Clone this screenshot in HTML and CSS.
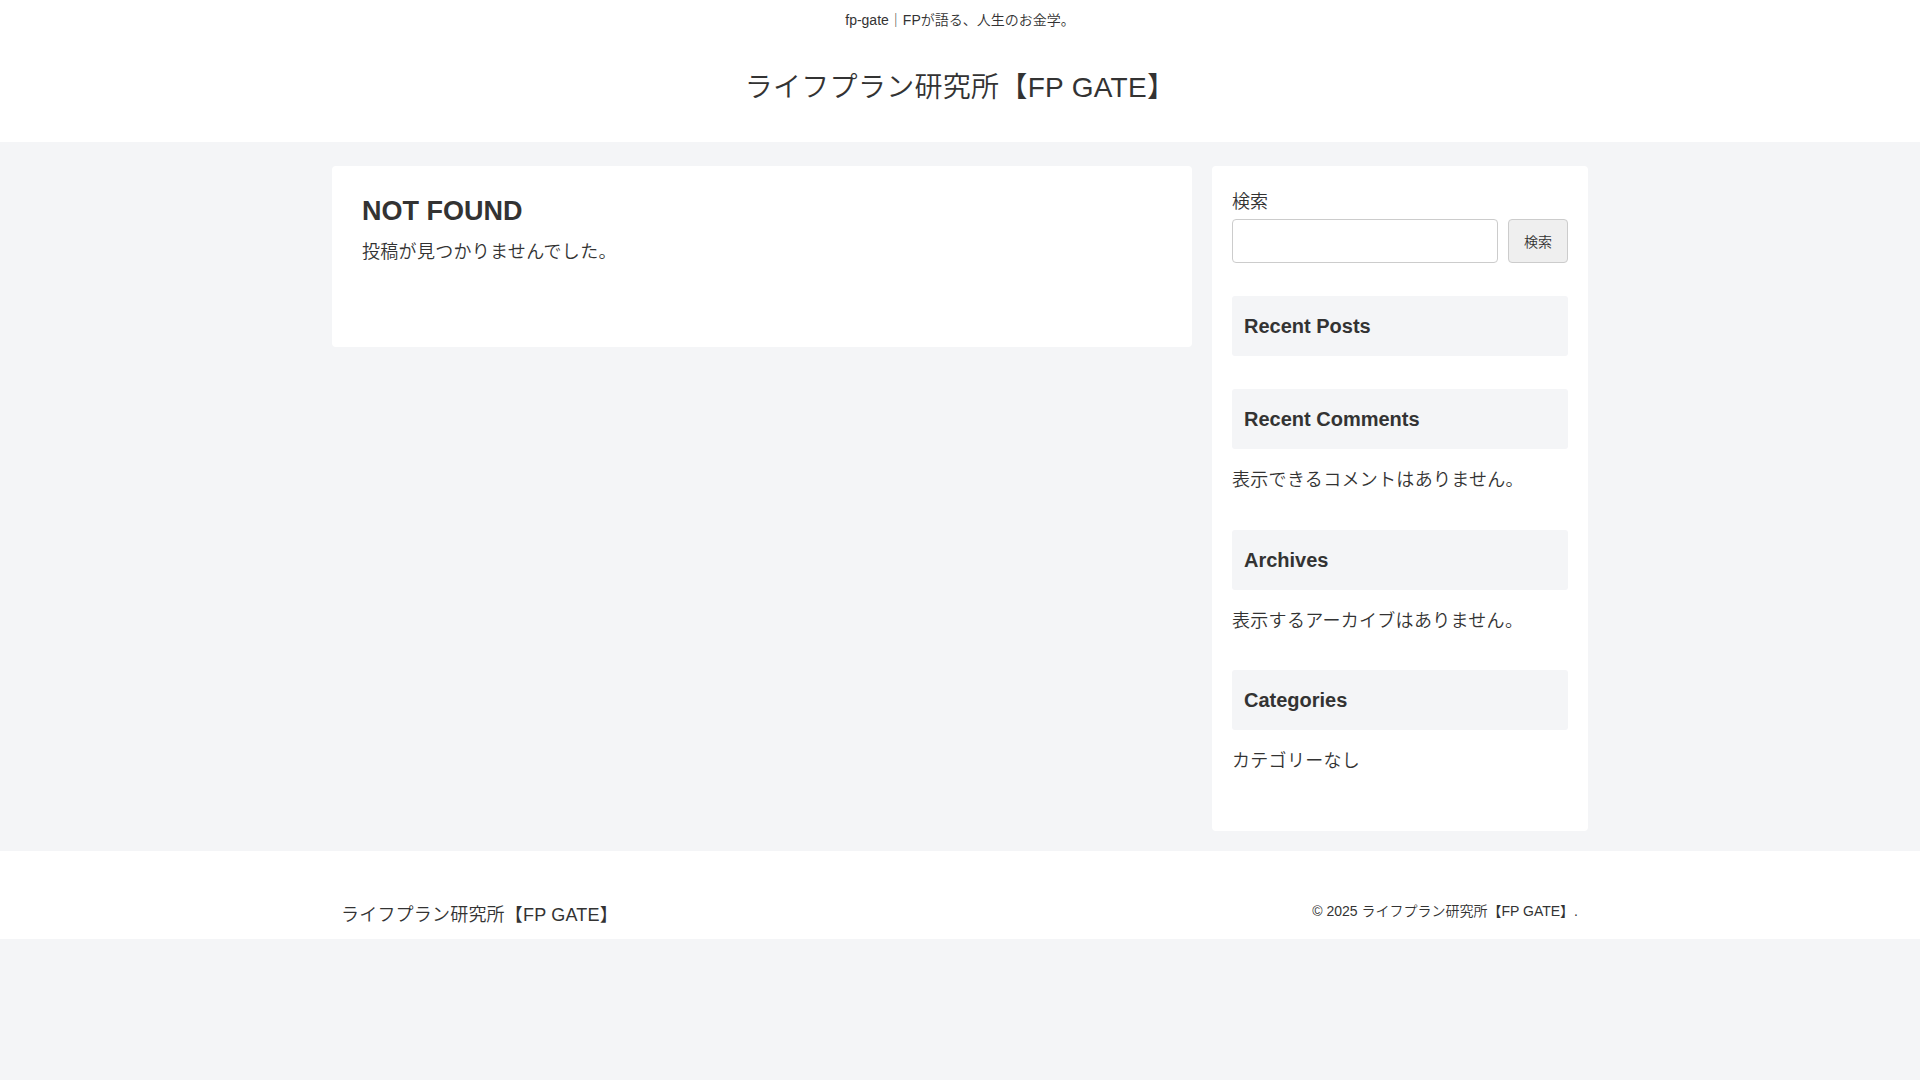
FILE: index.html
```html
<!DOCTYPE html>
<html lang="ja">
<head>
<meta charset="utf-8">
<title>ライフプラン研究所【FP GATE】</title>
<link rel="stylesheet" href="styles.css">
</head>
<body>
<header class="header">
  <div class="tagline">fp-gate｜FPが語る、人生のお金学。</div>
  <div class="logo">ライフプラン研究所【FP GATE】</div>
</header>
<div class="content">
  <main class="main">
    <h1 class="entry-title">NOT FOUND</h1>
    <p class="not-found-text">投稿が見つかりませんでした。</p>
  </main>
  <aside class="sidebar">
    <div class="widget widget-search">
      <label class="search-label">検索</label>
      <div class="search-row">
        <input class="search-input" type="text">
        <button class="search-button">検索</button>
      </div>
    </div>
    <div class="widget">
      <h2 class="widget-title">Recent Posts</h2>
    </div>
    <div class="widget">
      <h2 class="widget-title">Recent Comments</h2>
      <p class="widget-text">表示できるコメントはありません。</p>
    </div>
    <div class="widget">
      <h2 class="widget-title">Archives</h2>
      <p class="widget-text">表示するアーカイブはありません。</p>
    </div>
    <div class="widget">
      <h2 class="widget-title">Categories</h2>
      <p class="widget-text">カテゴリーなし</p>
    </div>
  </aside>
</div>
<footer class="footer">
  <div class="footer-in">
    <div class="footer-logo">ライフプラン研究所【FP GATE】</div>
    <div class="copyright">© 2025 ライフプラン研究所【FP GATE】.</div>
  </div>
</footer>
</body>
</html>
```
FILE: styles.css
```css
* { box-sizing: border-box; }
html, body { margin: 0; padding: 0; }
body {
  background: #f4f5f7;
  color: #333;
  font-family: "Liberation Sans", "Noto Sans CJK JP", sans-serif;
  font-size: 18px;
  font-weight: 350;
  line-height: 1.8;
}
.header {
  background: #fff;
  padding: 8px 0 29px;
  text-align: center;
}
.tagline {
  font-size: 14px;
  line-height: 25px;
}
.logo {
  margin-top: 30px;
  font-size: 28px;
  letter-spacing: 0.3px;
  line-height: 50px;
}
.content {
  width: 1256px;
  margin: 0 auto;
  padding-top: 24px;
  display: flex;
  gap: 20px;
  align-items: flex-start;
}
.main {
  width: 860px;
  background: #fff;
  border-radius: 4px;
  padding: 28px 30px 36px;
}
.entry-title {
  margin: 0;
  font-size: 27px;
  font-weight: bold;
  line-height: 34px;
}
.not-found-text {
  margin: 8px 0 43px;
  letter-spacing: 0.3px;
}
.sidebar {
  width: 376px;
  background: #fff;
  border-radius: 4px;
  padding: 20px;
}
.widget {
  margin-bottom: 33px;
}
.search-label {
  display: block;
  line-height: 32.4px;
}
.search-row {
  display: flex;
  gap: 10px;
  margin-top: 1px;
}
.search-input {
  width: 266px;
  height: 44px;
  border: 1px solid #ccc;
  border-radius: 4px;
  background: #fff;
  margin: 0;
}
.search-button {
  width: 60px;
  height: 44px;
  border: 1px solid #ccc;
  border-radius: 4px;
  background: #efefef;
  color: #333;
  font-family: inherit;
  font-size: 14px;
  font-weight: 350;
  padding: 0;
  margin: 0;
}
.widget-title {
  margin: 0;
  background: #f4f5f7;
  border-radius: 3px;
  padding: 0 12px;
  height: 60px;
  line-height: 60px;
  font-size: 20px;
  font-weight: bold;
}
.widget-text {
  margin: 15px 0 0;
  letter-spacing: 0.3px;
  line-height: 32.4px;
}
.footer {
  margin-top: 20px;
  background: #fff;
  padding: 48px 0 8px;
}
.footer-in {
  width: 1256px;
  margin: 0 auto;
  padding: 0 10px 0 9px;
  display: flex;
  justify-content: space-between;
  align-items: flex-start;
}
.footer-logo {
  letter-spacing: 0.2px;
  line-height: 32px;
}
.copyright {
  font-size: 14px;
  line-height: 25px;
}
```
